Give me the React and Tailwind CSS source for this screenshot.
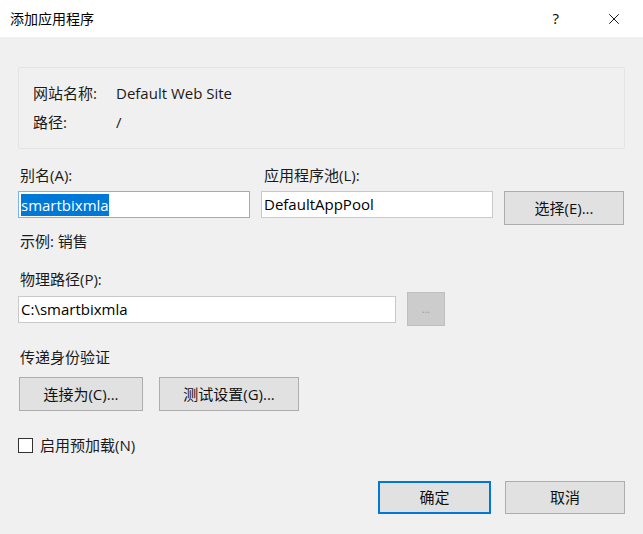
import { X } from 'lucide-react'

const font = { fontFamily: '"Open Sans", "Noto Sans CJK SC", sans-serif' }

function Btn({ children, className = '' }) {
    return (
        <button className={`flex items-center justify-center bg-[#e1e1e1] text-[15px] text-[#111111] ${className}`}>
            {children}
        </button>
    )
}

function Field({ children, className = '' }) {
    return (
        <div className={`h-[27px] flex items-center bg-white border px-[2px] text-[15px] text-black ${className}`}>
            {children}
        </div>
    )
}

export default function App() {
    return (
        <div className="w-[643px] h-[534px] bg-[#f0f0f0] flex flex-col text-[15px] text-[#1a1a1a]" style={font}>
            <div className="h-[37px] bg-white flex items-center pl-[10px] pr-[20px]">
                <span className="flex-1 text-[14px] text-black">添加应用程序</span>
                <span className="text-[15px] text-black mr-[46px]">?</span>
                <X size={18} strokeWidth={1.2} className="text-black" />
            </div>

            <div className="px-[18px] flex flex-col">
                <div className="mt-[30px] h-[82px] border border-[#e4e4e4] rounded-[2px] pl-[14px] pt-[15px] flex flex-col gap-[8px]">
                    <div className="flex h-[21px] items-center">
                        <span className="w-[83px]">网站名称:</span>
                        <span>Default Web Site</span>
                    </div>
                    <div className="flex h-[21px] items-center">
                        <span className="w-[83px]">路径:</span>
                        <span>/</span>
                    </div>
                </div>

                <div className="mt-[15px] grid grid-cols-[232px_232px_120px] gap-x-[11px] items-start">
                    <div className="h-[22px] pl-[2px] flex items-center">别名(A):</div>
                    <div className="h-[22px] pl-[3px] flex items-center">应用程序池(L):</div>
                    <div />
                    <Field className="mt-[5px] border-[#7eb4ea]">
                        <span className="bg-[#0078d7] text-white leading-[22px]">smartbixmla</span>
                    </Field>
                    <Field className="mt-[5px] border-[#c9c9c9]">DefaultAppPool</Field>
                    <Btn className="mt-[5px] h-[34px] border border-[#adadad]">选择(E)...</Btn>
                </div>

                <div className="mt-[5px] h-[22px] pl-[2px] flex items-center">示例: 销售</div>

                <div className="mt-[16px] h-[22px] pl-[2px] flex items-center">物理路径(P):</div>
                <div className="mt-[2px] flex items-center gap-[11px]">
                    <Field className="w-[378px] border-[#c9c9c9]">C:\smartbixmla</Field>
                    <div className="w-[38px] h-[34px] bg-[#cccccc] border border-[#bfbfbf] flex items-center justify-center text-[10px] text-[#9a9a9a]">...</div>
                </div>

                <div className="mt-[20px] h-[22px] pl-[2px] flex items-center">传递身份验证</div>
                <div className="mt-[9px] flex gap-[16px] pl-[1px]">
                    <Btn className="w-[124px] h-[34px] border border-[#adadad]">连接为(C)...</Btn>
                    <Btn className="w-[140px] h-[34px] border border-[#adadad]">测试设置(G)...</Btn>
                </div>

                <div className="mt-[23px] h-[22px] flex items-center gap-[7px]">
                    <div className="w-[15px] h-[15px] bg-white border border-[#333333]" />
                    <span>启用预加载(N)</span>
                </div>

                <div className="mt-[25px] flex justify-end gap-[14px]">
                    <Btn className="w-[113px] h-[33px] border-2 border-[#0078d7]">确定</Btn>
                    <Btn className="w-[120px] h-[33px] border border-[#adadad]">取消</Btn>
                </div>
            </div>
        </div>
    )
}
